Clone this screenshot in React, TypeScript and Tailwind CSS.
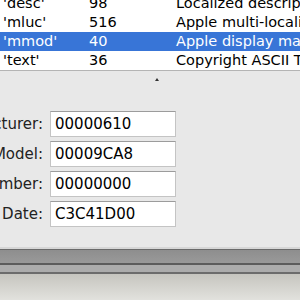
const ROWS = [
  { sig: "'desc'", size: "98", desc: "Localized description" },
  { sig: "'mluc'", size: "516", desc: "Apple multi-localized" },
  { sig: "'mmod'", size: "40", desc: "Apple display make and model", selected: true },
  { sig: "'text'", size: "36", desc: "Copyright ASCII Text" },
];

const FIELDS = [
  { label: "Manufacturer:", value: "00000610" },
  { label: "Model:", value: "00009CA8" },
  { label: "Serial Number:", value: "00000000" },
  { label: "Date:", value: "C3C41D00" },
];

export default function App() {
  return (
    <div
      className="relative h-[300px] w-[300px] overflow-hidden bg-[#e8e8e8]"
      style={{ fontFamily: '"DejaVu Sans", sans-serif' }}
    >
      {/* Tag table */}
      <div className="-mt-[6px] border-b border-[#b4b4b4] bg-white">
        {ROWS.map((r) => (
          <div
            key={r.sig}
            className={
              "flex h-[19px] items-center whitespace-nowrap text-[14.5px] leading-none " +
              (r.selected ? "bg-[#3875d7] text-white" : "text-black")
            }
          >
            <span className="w-[89px] shrink-0 pl-[3px]">{r.sig}</span>
            <span className="w-[87px] shrink-0">{r.size}</span>
            <span className="shrink-0">{r.desc}</span>
          </div>
        ))}
      </div>

      {/* Splitter grip */}
      <div className="absolute left-[155px] top-[78px] h-0 w-0 border-x-[2px] border-b-[3px] border-x-transparent border-b-[#333]" />

      {/* Tag fields */}
      <div className="mt-[40px] flex flex-col gap-[4px]">
        {FIELDS.map((f) => (
          <div key={f.label} className="flex h-[26px] items-center">
            <span className="flex w-[43px] shrink-0 justify-end overflow-hidden whitespace-nowrap text-[15px] text-[#222]">
              {f.label}
            </span>
            <div className="ml-[7px] flex h-[26px] w-[126px] items-center border border-[#c4c4c4] border-t-[#9c9c9c] bg-white pl-[4px] text-[15px] text-black">
              {f.value}
            </div>
          </div>
        ))}
      </div>

      {/* Bottom bars */}
      <div className="absolute left-0 right-0 top-[247px]">
        <div className="h-[2px] bg-[#d6d6d6]" />
        <div className="h-[1px] bg-[#6a6a6a]" />
        <div className="h-[13px] bg-gradient-to-b from-[#8e8e8e] to-[#999]" />
        <div className="h-[2px] bg-[#5c5c5c]" />
        <div className="h-[7px] bg-[#acacac]" />
        <div className="h-[2px] bg-[#6c6c6c]" />
        <div className="h-[30px] bg-gradient-to-b from-[#c6c5bf] to-[#e6e6e2]" />
      </div>
    </div>
  );
}
